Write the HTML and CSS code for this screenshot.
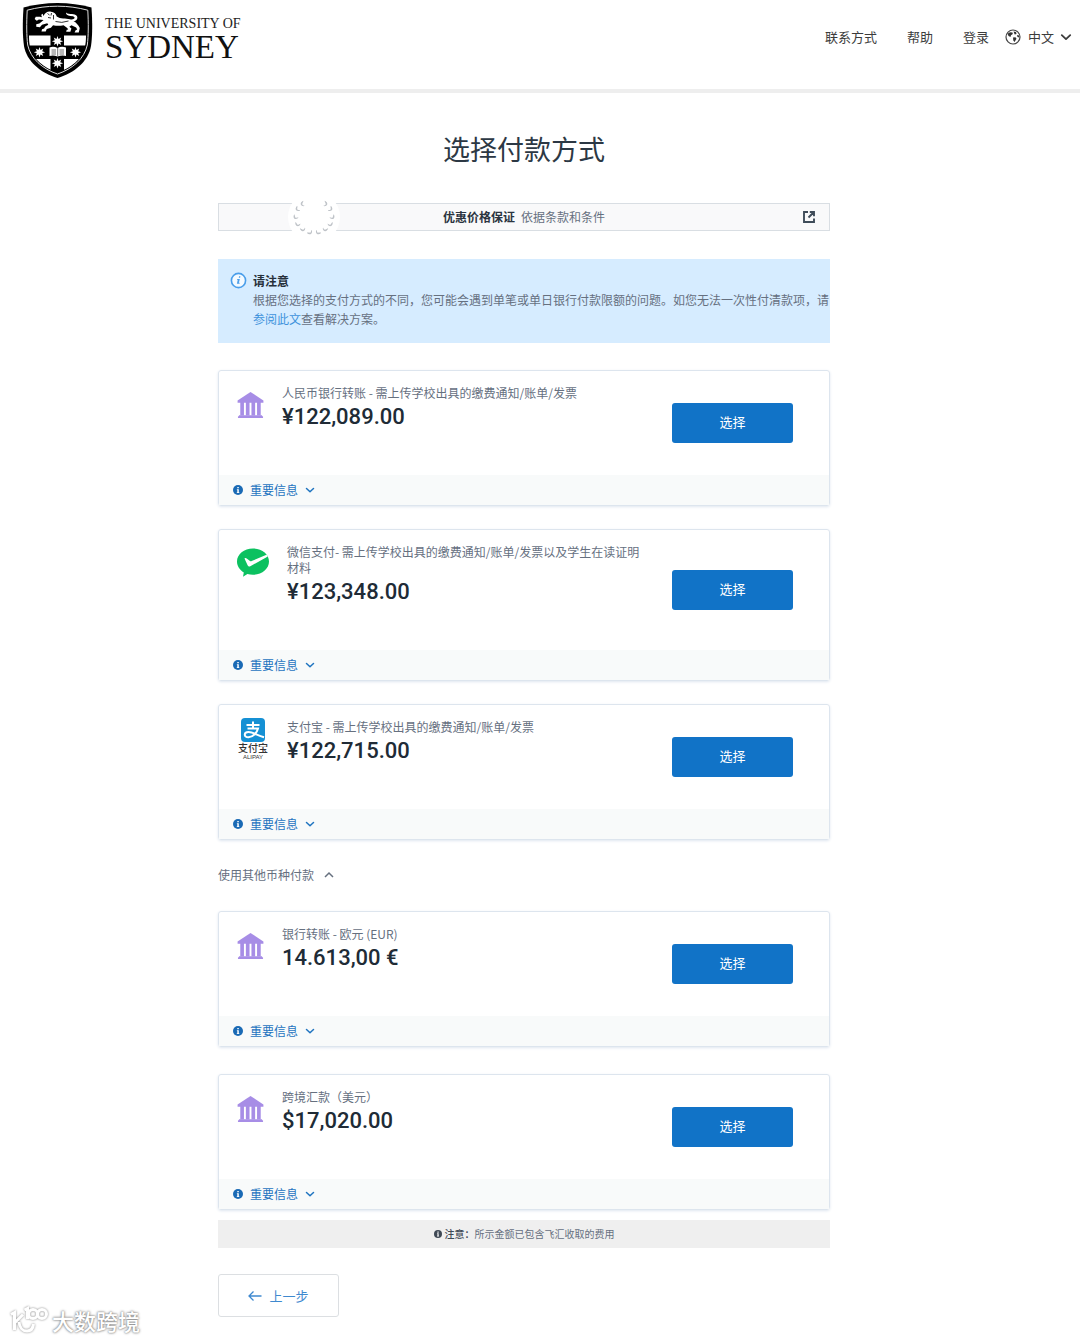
FILE: index.html
```html
<!DOCTYPE html>
<html lang="zh-CN">
<head>
    <meta charset="UTF-8">
    <meta name="viewport" content="width=device-width, initial-scale=1">
    <title>选择付款方式</title>
    <link rel="stylesheet" href="styles.css">
</head>
<body>
<!-- 公用图标 -->
<svg class="sprite" aria-hidden="true">
    <symbol id="bank" viewBox="0 0 28 28">
        <path d="M14 0.5 27.4 9.3V11.6H0.6V9.3Z"/>
        <path d="M3.4 11h3.800v14H3.400zM9.200 11h3.800v14H9.200zM15 11h3.800v14H15zM20.800 11h3.800v14h-3.800z"/>
        <path d="M2 24.6h24v1H27v2H1v-2h1z"/>
    </symbol>
    <symbol id="info" viewBox="0 0 10 10">
        <circle cx="5" cy="5" r="5"/>
        <path d="M4.3 2h1.5v1.3H4.3zM3.9 4.2h1.9v3h.5v.9H3.8v-.9h.5V5h-.4z" fill="#fff"/>
    </symbol>
    <symbol id="down" viewBox="0 0 10 10">
        <path d="M1.5 3.5 5 6.8 8.5 3.5" fill="none" stroke="currentColor" stroke-width="1.5" stroke-linecap="round" stroke-linejoin="round"/>
    </symbol>
    <symbol id="leaf" viewBox="0 0 6 6">
        <path d="M0.8 0.6C1.600 1.400 1.900 2.600 2.400 3.600 3.400 4 4.500 3.300 5.500 2.900 5.200 4.600 3.400 5.500 1.700 4.900 0.400 4.200 0.100 2 0.800 0.600Z"/>
    </symbol>
</svg>

<header class="header">
    <a class="logo" href="#" aria-label="The University of Sydney">
        <svg class="crest" viewBox="0 0 70 75">
            <path d="M1 4.5C12 1.5 23 0 35 0s23 1.500 34 4.500C70 19 70 33 68.500 43 66 58 52 70 35 75 18 70 4 58 1.500 43 0 33 0 19 1 4.500Z"/>
            <path d="M6.500 32.500H63.500C63.500 37 63.300 41 62.300 44 59.500 56 49 65 35 69.500 21 65 10.500 56 7.700 44 6.700 41 6.500 37 6.500 32.500Z" fill="#fff"/>
            <path d="M28 32h13.500v36L35 70l-7-2zM7 42.500h56.500l-2 8-3 5.500H11.500l-3-5.500z"/>
            <path d="M4.700 7.200C15 4.500 24 3.200 35 3.200s20 1.300 30.300 4C66 20 66 33 64.800 42 62 55.500 50 66 35 71 20 66 8 55.500 5.200 42 4 33 4 20 4.700 7.200Z" fill="none" stroke="#ddd" stroke-width="1"/>
            <g fill="#fff">
                <path id="star" d="m35 33 1 2.900 2.700-1.500-1 2.800 2.900 1-2.900 1 1 2.700-2.700-1.300L35 43.500l-1-2.900-2.700 1.300 1-2.700-2.900-1 2.900-1-1-2.800 2.700 1.500z"/>
                <use href="#star" x="-18" y="11"/>
                <use href="#star" x="18" y="11"/>
                <use href="#star" y="22"/>
                <path d="M27 44.500q4-1.500 8 .5 4-2 8.500-.5V53q-4-1-8.500.5-4-1.500-8-.5z"/>
            </g>
            <path d="M35.200 45v8.500M29 47h4.500M29 49h4.500M29 51h4.500M37 47h4.500M37 49h4.500M37 51h4.500" fill="none" stroke="#333" stroke-width=".7"/>
            <!-- 狮子 -->
            <path transform="translate(-2 0) scale(1.05 1.08)" d="M22 12c1-3 4-4.500 7-4 3 .3 5 2 5.500 4.500C38 15 43 14 47 15c2 .5 4 .3 4.500-1 .5-1.500-2-1.800-4-2-3-.2-4.500-1.500-4-3.200 1.300 1.600 3.500 1.200 5.500 1.400 4 .3 5.800 2 5 4.300-.5 1.500-2 2-3.500 2.200 2.500 1.500 4.500 3.500 6 6.500l-1 4h-4l1-2 1.500-.6-1-2-4.500-2-2 1.500 2 1.500-1 3h-4l.5-1.800 1.500-.3-1-1.400-3.500-2.600c-4 .8-7 .5-10 0l-2 2.500-4 1-1 2.500h-4l.5-2.200 2-.6 1-2 3-1.500-1-1.500-5 1.500-2 2.200-3.500-.3v-2.500l3-.7 4-3.100-4.500-.6-2 1.200-2-1.500 1-2.200h4l2 .6c-1-1.500-.8-3 .5-3.300z" fill="#fff"/>
            <path d="M25 10.500l2 1.500M29 10l-.5 2.500M25.500 14.500l3 .5M31 12v4.500M33 18.500q6 2 13-.5" fill="none" stroke="#000" stroke-width=".8"/>
        </svg>
        <span class="logo-text">
            <span class="logo-small">THE UNIVERSITY OF</span>
            <span class="logo-big">SYDNEY</span>
        </span>
    </a>
    <nav class="nav">
        <a href="#">联系方式</a>
        <a href="#">帮助</a>
        <a href="#">登录</a>
        <div class="lang">
            <svg class="globe" viewBox="0 0 16 16">
                <circle cx="8" cy="8" r="7" fill="none" stroke="#444" stroke-width="1.200"/>
                <path d="M2.500 4.800 5 3.200l2.500.3.300 1.500L6 6.200 5.500 8 3.500 7zM8.500 2.500l2.500.6.500 2-1.800.3zM8 8.500l2.500-.2 1 1.500L9.500 13l-1.200-1.500zM12 6l2.200.5v2L12.500 8z" fill="#333"/>
            </svg>
            <select id="lang" aria-label="语言">
                <option>中文</option>
            </select>
            <svg class="lang-arrow" viewBox="0 0 10 10"><use href="#down"/></svg>
        </div>
    </nav>
</header>

<main class="main">
    <h1>选择付款方式</h1>

    <a class="promise" href="#">
        <span class="wreath">
            <svg viewBox="0 0 52 52" fill="#bfc3c8">
                <g id="half">
                    <use href="#leaf" width="6" height="6" transform="translate(22 41) rotate(-60) translate(-3 -3)"/>
                    <use href="#leaf" width="6" height="6" transform="translate(15 38) rotate(-35) translate(-3 -3)"/>
                    <use href="#leaf" width="6" height="6" transform="translate(10 33) rotate(-10) translate(-3 -3)"/>
                    <use href="#leaf" width="6" height="6" transform="translate(8 26) rotate(10) translate(-3 -3)"/>
                    <use href="#leaf" width="6" height="6" transform="translate(10 18) rotate(30) translate(-3 -3)"/>
                    <use href="#leaf" width="6" height="6" transform="translate(15 13) rotate(50) translate(-3 -3)"/>
                </g>
                <use href="#half" transform="matrix(-1 0 0 1 52 0)"/>
            </svg>
        </span>
        <strong>优惠价格保证</strong>
        <span>依据条款和条件</span>
        <svg class="open" viewBox="0 0 12 12">
            <path d="M5 1H1v10h10V7.500M6.800 1H11v4.200M11 1 5.500 6.500" fill="none" stroke="#3f4c59" stroke-width="1.900"/>
        </svg>
    </a>

    <section class="notice">
        <svg class="notice-icon" viewBox="0 0 18 18">
            <circle cx="9" cy="9" r="7.500" fill="#f4faff" stroke="#4a9eea" stroke-width="1.700"/>
            <path d="M9.600 4.600h1.400l-.3 1.500H9.300zM7.500 7.300h2.900l-1 4.200h.9l-.2.900H7.300l.9-4.200h-.9z" fill="#4a9eea"/>
        </svg>
        <div>
            <h2>请注意</h2>
            <p>根据您选择的支付方式的不同，您可能会遇到单笔或单日银行付款限额的问题。如您无法一次性付清款项，请<a href="#">参阅此文</a>查看解决方案。</p>
        </div>
    </section>

    <div class="list">
        <article class="card">
            <div class="card-body">
                <svg class="bank"><use href="#bank"/></svg>
                <div class="card-text">
                    <h3>人民币银行转账 - 需上传学校出具的缴费通知/账单/发票</h3>
                    <p class="price">¥122,089.00</p>
                </div>
                <button class="choose" type="button">选择</button>
            </div>
            <div class="card-foot">
                <button class="more" type="button" aria-expanded="false">
                    <svg><use href="#info"/></svg>重要信息<svg><use href="#down"/></svg>
                </button>
            </div>
        </article>

        <article class="card">
            <div class="card-body">
                <svg class="wechat" viewBox="0 0 32 30">
                    <path d="M16 .5C25 .5 32 6.300 32 13.500S25 26.700 16 26.700c-2 0-3.900-.3-5.600-.8L6 28.700l.8-4.300C2.700 22 0 18 0 13.500 0 6.300 7 .5 16 .5Z" fill="#0cc160"/>
                    <path d="M7.500 10.500c.8-.8 1.500-.5 2.200 0l3.300 2.400c.6.400 1 .4 1.700.1L29.500 6.700c.7.700 1 1.100 1.300 1.800L13.300 18.200c-1.100.6-2 .4-2.700-.9z" fill="#fff"/>
                </svg>
                <div class="card-text">
                    <h3>微信支付- 需上传学校出具的缴费通知/账单/发票以及学生在读证明材料</h3>
                    <p class="price">¥123,348.00</p>
                </div>
                <button class="choose" type="button">选择</button>
            </div>
            <div class="card-foot">
                <button class="more" type="button" aria-expanded="false">
                    <svg><use href="#info"/></svg>重要信息<svg><use href="#down"/></svg>
                </button>
            </div>
        </article>

        <article class="card">
            <div class="card-body">
                <div class="alipay">
                    <svg class="alipay-mark" viewBox="0 0 24 24">
                        <rect width="24" height="24" rx="4" fill="#1590d4"/>
                        <path d="M5.500 7h13M12 3.500v7M6.500 10.500h10.500C16 14.500 12.500 19 7.500 19.200 2.500 19.300 2.500 14 7.500 14c4.500 0 8.500 3.300 15.500 5.200" fill="none" stroke="#fff" stroke-width="2"/>
                    </svg>
                    <span class="alipay-cn">支付宝</span>
                    <span class="alipay-en">ALIPAY</span>
                </div>
                <div class="card-text">
                    <h3>支付宝 - 需上传学校出具的缴费通知/账单/发票</h3>
                    <p class="price">¥122,715.00</p>
                </div>
                <button class="choose" type="button">选择</button>
            </div>
            <div class="card-foot">
                <button class="more" type="button" aria-expanded="false">
                    <svg><use href="#info"/></svg>重要信息<svg><use href="#down"/></svg>
                </button>
            </div>
        </article>
    </div>

    <button class="others" type="button" aria-expanded="true">
        使用其他币种付款<svg viewBox="0 0 10 10"><path d="M1 7 5 3l4 4" fill="none" stroke="currentColor" stroke-width="1.500"/></svg>
    </button>

    <div class="list list-other">
        <article class="card">
            <div class="card-body">
                <svg class="bank"><use href="#bank"/></svg>
                <div class="card-text">
                    <h3>银行转账 - 欧元 (EUR)</h3>
                    <p class="price">14.613,00 €</p>
                </div>
                <button class="choose" type="button">选择</button>
            </div>
            <div class="card-foot">
                <button class="more" type="button" aria-expanded="false">
                    <svg><use href="#info"/></svg>重要信息<svg><use href="#down"/></svg>
                </button>
            </div>
        </article>

        <article class="card">
            <div class="card-body">
                <svg class="bank"><use href="#bank"/></svg>
                <div class="card-text">
                    <h3>跨境汇款（美元）</h3>
                    <p class="price">$17,020.00</p>
                </div>
                <button class="choose" type="button">选择</button>
            </div>
            <div class="card-foot">
                <button class="more" type="button" aria-expanded="false">
                    <svg><use href="#info"/></svg>重要信息<svg><use href="#down"/></svg>
                </button>
            </div>
        </article>
    </div>

    <p class="fee"><svg><use href="#info"/></svg><strong>注意：</strong>所示金额已包含飞汇收取的费用</p>

    <button class="back" type="button">
        <svg viewBox="0 0 14 12"><path d="M13.500 6H1M5.500 1.500 1 6l4.500 4.500" fill="none" stroke="currentColor" stroke-width="1.300"/></svg>上一步
    </button>
</main>

<div class="mark">
    <svg viewBox="0 0 38 28">
        <path d="M1 8.500 4.500 6.500V24M13 8.500 5 16.500M9 16C9.500 22 13 25 17 25S23 22.500 23.500 18M14.500 4 17.500 2.500V13" />
        <circle cx="23" cy="8" r="4.500"/>
        <circle cx="32" cy="8" r="4.500"/>
    </svg>
    <span>大数跨境</span>
</div>
</body>
</html>
```

FILE: styles.css
```css
*{margin: 0;padding: 0;box-sizing: border-box;}
body{background: #fff;color: #66707f;font: 12px/16px "Noto Sans CJK SC",sans-serif;position: relative;}
a{text-decoration: none;color: inherit;}
button,select{font: inherit;border: 0;background: none;color: inherit;cursor: pointer;}
svg{display: block;flex: none;}
.sprite{position: absolute;width: 0;height: 0;}

/*头部*/
.header{display: flex;justify-content: space-between;align-items: flex-start;border-bottom: 4px solid #eee;padding: 3px 8px 11px 22px;}
.logo{display: flex;gap: 12px;color: #222;}
.crest{width: 71px;height: 75px;}
.logo-text{display: flex;flex-direction: column;padding-top: 13px;font-family: "Liberation Serif",serif;white-space: nowrap;}
.logo-small{font-size: 14px;line-height: 16px;}
.logo-big{font-size: 33px;line-height: 30px;color: #111;}
.nav{display: flex;gap: 30px;padding-top: 24px;font-size: 13px;line-height: 20px;color: #3c3c3c;}
.lang{display: flex;align-items: center;margin-left: -14px;gap: 7px;}
.globe{width: 16px;height: 16px;}
.lang select{appearance: none;line-height: 20px;}
.lang-arrow{width: 12px;height: 12px;margin-left: -2px;}

/*主体*/
.main{width: calc(100% - 32px);max-width: 612px;margin: 0 auto;padding: 36px 0 24px;position: relative;right: 16px;}
h1{font-size: 27px;line-height: 40px;font-weight: 400;text-align: center;color: #2c3844;margin-bottom: 34px;}

.promise{display: flex;justify-content: center;align-items: center;gap: 6px;height: 28px;border: 1px solid #d9dee3;background: #f9f9fa;position: relative;margin-bottom: 28px;}
.promise strong{color: #2b3440;}
.wreath{position: absolute;left: 69px;top: -13px;width: 52px;height: 52px;border-radius: 50%;background: #fff;}
.open{width: 12px;height: 12px;position: absolute;right: 14px;top: 7px;}

.notice{display: flex;gap: 6px;background: #d6ecff;padding: 12px 0 15px 12px;margin-bottom: 27px;line-height: 19px;}
.notice-icon{width: 17px;height: 17px;margin-top: 1px;}
.notice h2{font-size: 12px;font-weight: 700;color: #26303a;}
.notice a{color: #3f93dc;}

.list{display: flex;flex-direction: column;gap: 23px;}
.list-other{gap: 27px;}
.card{border: 1px solid #dde5ee;border-radius: 3px;box-shadow: 0 1px 3px #dfe6f0;}
.card-body{display: flex;align-items: flex-start;gap: 18px;padding: 14px 36px 42px 18px;}
.card-text{flex: 1;}
.card h3{font-size: 12px;font-weight: 400;}
.price{font: 500 22px/32px Roboto,sans-serif;color: #202b36;}
.bank{width: 27px;height: 28px;margin-top: 6px;fill: #a78de6;}
.wechat{width: 32px;height: 30px;margin-top: 4px;}
.choose{align-self: center;width: 121px;height: 40px;border-radius: 3px;background: #1173c7;color: #fff;font-size: 13px;line-height: 16px;padding-bottom: 2px;margin: 0 0 -28px 8px;}
.card-foot{background: #f8fafa;padding: 7px 14px;}
.more{display: flex;align-items: center;gap: 7px;color: #1f74c0;}
.more svg{width: 10px;height: 10px;fill: #1a6ab5;}

.alipay{width: 32px;display: flex;flex-direction: column;align-items: center;color: #333;margin-top: -1px;}
.alipay-mark{width: 24px;height: 24px;}
.alipay-cn{font-size: 10px;line-height: 12px;font-weight: 500;}
.alipay-en{font: 6px/6px "Liberation Sans",sans-serif;}

.others{display: flex;align-items: center;gap: 10px;margin: 27px 0 28px;}
.others svg{width: 10px;height: 10px;}

.fee{display: flex;justify-content: center;align-items: center;background: #efefef;font-size: 10px;line-height: 28px;margin: 10px 0 26px;}
.fee svg{width: 8px;height: 8px;margin-right: 3px;fill: #3f4955;}
.fee strong{font-weight: 500;color: #3f4955;}

.back{display: flex;align-items: center;justify-content: center;gap: 7px;width: 121px;height: 43px;border: 1px solid #dcdfe2;border-radius: 3px;color: #3f89cf;font-size: 13px;}
.back svg{width: 14px;height: 12px;}

/*水印*/
.mark{position: absolute;left: 10px;bottom: 6px;display: flex;gap: 4px;align-items: center;color: #fff;font-size: 22px;line-height: 30px;font-weight: 500;text-shadow: 0 0 2px #777,0 0 3px #999;}
.mark svg{width: 38px;height: 28px;fill: none;stroke: #fff;stroke-width: 3;filter: drop-shadow(0 0 1px #888);}
```
